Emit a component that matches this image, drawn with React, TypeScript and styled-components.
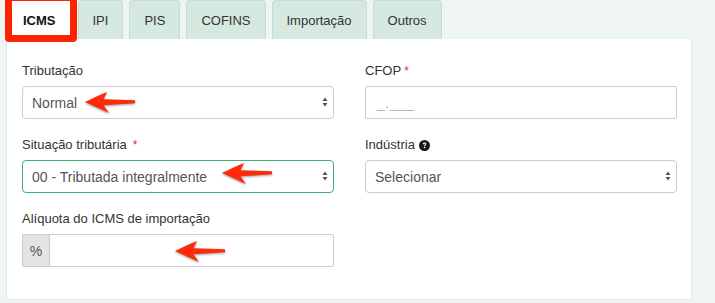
import React from "react";
import styled, { createGlobalStyle, css } from "styled-components";

const Global = createGlobalStyle`
  html, body { margin: 0; padding: 0; background: #eff5f3; }
  body { font-family: "Liberation Sans", Arial, sans-serif; }
  * { box-sizing: border-box; }
`;

const Page = styled.div`
  position: relative;
  width: 715px;
  height: 303px;
  background: #eff5f3;
  overflow: hidden;
  padding-left: 6px;
`;

const TabBar = styled.div`
  display: flex;
  gap: 6px;
  height: 39px;
  padding-left: 1px;
`;

const Tab = styled.div<{ $active?: boolean }>`
  height: 39px;
  padding: 0 14px;
  display: flex;
  align-items: center;
  font-size: 13px;
  color: #333;
  background: #d5e9e1;
  border: 1px solid #c6dcd3;
  border-bottom: none;
  border-radius: 4px 4px 0 0;
  ${(p) =>
    p.$active &&
    css`
      background: #fff;
      border-color: #fff;
      font-weight: bold;
      color: #111;
      padding: 0 15px;
    `}
`;

const Panel = styled.div`
  width: 686px;
  height: 261px;
  background: #fff;
  border: 1px solid #e4e9e7;
  border-top: none;
  padding: 23px 16px 0 15px;
  display: grid;
  grid-template-columns: 312px 312px;
  column-gap: 31px;
  row-gap: 17px;
  align-content: start;
`;

const Group = styled.div`
  display: flex;
  flex-direction: column;
`;

const Label = styled.label`
  height: 18px;
  line-height: 18px;
  font-size: 13px;
  color: #333;
  margin-bottom: 6px;
  display: flex;
  align-items: center;
  gap: 3px;
`;

const Req = styled.span<{ $spaced?: boolean }>`
  color: #e02b2b;
  font-size: 12px;
  margin-left: ${(p) => (p.$spaced ? "3px" : "0")};
`;

const SelectWrap = styled.div`
  position: relative;
  height: 33px;
`;

const SelectBox = styled.div<{ $focus?: boolean }>`
  height: 33px;
  border: 1px solid ${(p) => (p.$focus ? "#37b476" : "#ccc")};
  border-radius: 4px;
  padding: 0 24px 0 9px;
  display: flex;
  align-items: center;
  font-size: 14px;
  color: #555;
  background: #fff;
`;

const Caret = styled.svg`
  position: absolute;
  right: 6px;
  top: 11px;
`;

const TextInput = styled.div`
  height: 33px;
  border: 1px solid #ccc;
  border-radius: 2px;
  padding: 0 11px;
  display: flex;
  align-items: center;
  font-size: 14px;
  color: #b5b5b5;
  letter-spacing: 0.5px;
  background: #fff;
`;

const InputGroup = styled.div`
  display: flex;
  height: 33px;
`;

const Addon = styled.div`
  width: 27px;
  border: 1px solid #ccc;
  border-right: none;
  border-radius: 2px 0 0 2px;
  background: #e4e4e4;
  color: #555;
  font-size: 14px;
  display: flex;
  align-items: center;
  justify-content: center;
`;

const AddonInput = styled.div`
  flex: 1;
  border: 1px solid #ccc;
  border-radius: 0 2px 2px 0;
  background: #fff;
`;

const HelpIcon = styled.svg`
  margin-left: 1px;
`;

const Highlight = styled.div`
  position: absolute;
  left: 5px;
  top: -6px;
  width: 72px;
  height: 48px;
  border: 7px solid #ff2200;
  border-radius: 4px;
  pointer-events: none;
`;

const ArrowSvg = styled.svg<{ $x: number; $y: number }>`
  position: absolute;
  left: ${(p) => p.$x}px;
  top: ${(p) => p.$y}px;
  filter: drop-shadow(0 1px 1.2px rgba(0, 0, 0, 0.4));
  overflow: visible;
`;

const Arrow = ({ x, y }: { x: number; y: number }) => (
  <ArrowSvg $x={x} $y={y} width="54" height="24" viewBox="0 0 54 24">
    <path
      d="M2 11 C 9 7.5, 17 4, 24 1 L 20.5 8.3 L 52 9.3 L 52 12.3 L 20.5 14.3 L 26 22 C 18 18.5, 10 14.5, 2 11 Z"
      fill="#ff2a0a"
    />
  </ArrowSvg>
);

const SelectCaret = () => (
  <Caret width="6" height="10" viewBox="0 0 6 10">
    <path d="M3 0.5 L5.5 4 L0.5 4 Z" fill="#555" />
    <path d="M3 9.5 L5.5 6 L0.5 6 Z" fill="#555" />
  </Caret>
);

const Select = ({ value, focus }: { value: string; focus?: boolean }) => (
  <SelectWrap>
    <SelectBox $focus={focus}>{value}</SelectBox>
    <SelectCaret />
  </SelectWrap>
);

export default function App() {
  return (
    <Page>
      <Global />
      <TabBar>
        <Tab $active>ICMS</Tab>
        <Tab>IPI</Tab>
        <Tab>PIS</Tab>
        <Tab>COFINS</Tab>
        <Tab>Importação</Tab>
        <Tab>Outros</Tab>
      </TabBar>
      <Panel>
        <Group>
          <Label>Tributação</Label>
          <Select value="Normal" />
        </Group>
        <Group>
          <Label>
            CFOP<Req>*</Req>
          </Label>
          <TextInput>_.___</TextInput>
        </Group>
        <Group>
          <Label>
            Situação tributária<Req $spaced>*</Req>
          </Label>
          <Select value="00 - Tributada integralmente" focus />
        </Group>
        <Group>
          <Label>
            Indústria
            <HelpIcon width="11" height="11" viewBox="0 0 16 16">
              <circle cx="8" cy="8" r="8" fill="#1a1a1a" />
              <path
                d="M5.6 6.1 C5.6 4.7 6.7 3.8 8.1 3.8 C9.6 3.8 10.6 4.7 10.6 5.9 C10.6 7.5 8.9 7.6 8.9 9 L7.2 9 C7.2 7 8.8 6.9 8.8 6 C8.8 5.5 8.5 5.2 8 5.2 C7.5 5.2 7.2 5.6 7.2 6.1 Z"
                fill="#fff"
              />
              <rect x="7.1" y="10" width="1.9" height="1.9" fill="#fff" />
            </HelpIcon>
          </Label>
          <Select value="Selecionar" />
        </Group>
        <Group>
          <Label>Alíquota do ICMS de importação</Label>
          <InputGroup>
            <Addon>%</Addon>
            <AddonInput />
          </InputGroup>
        </Group>
      </Panel>
      <Highlight />
      <Arrow x={83} y={91} />
      <Arrow x={220} y={162} />
      <Arrow x={173} y={240} />
    </Page>
  );
}
